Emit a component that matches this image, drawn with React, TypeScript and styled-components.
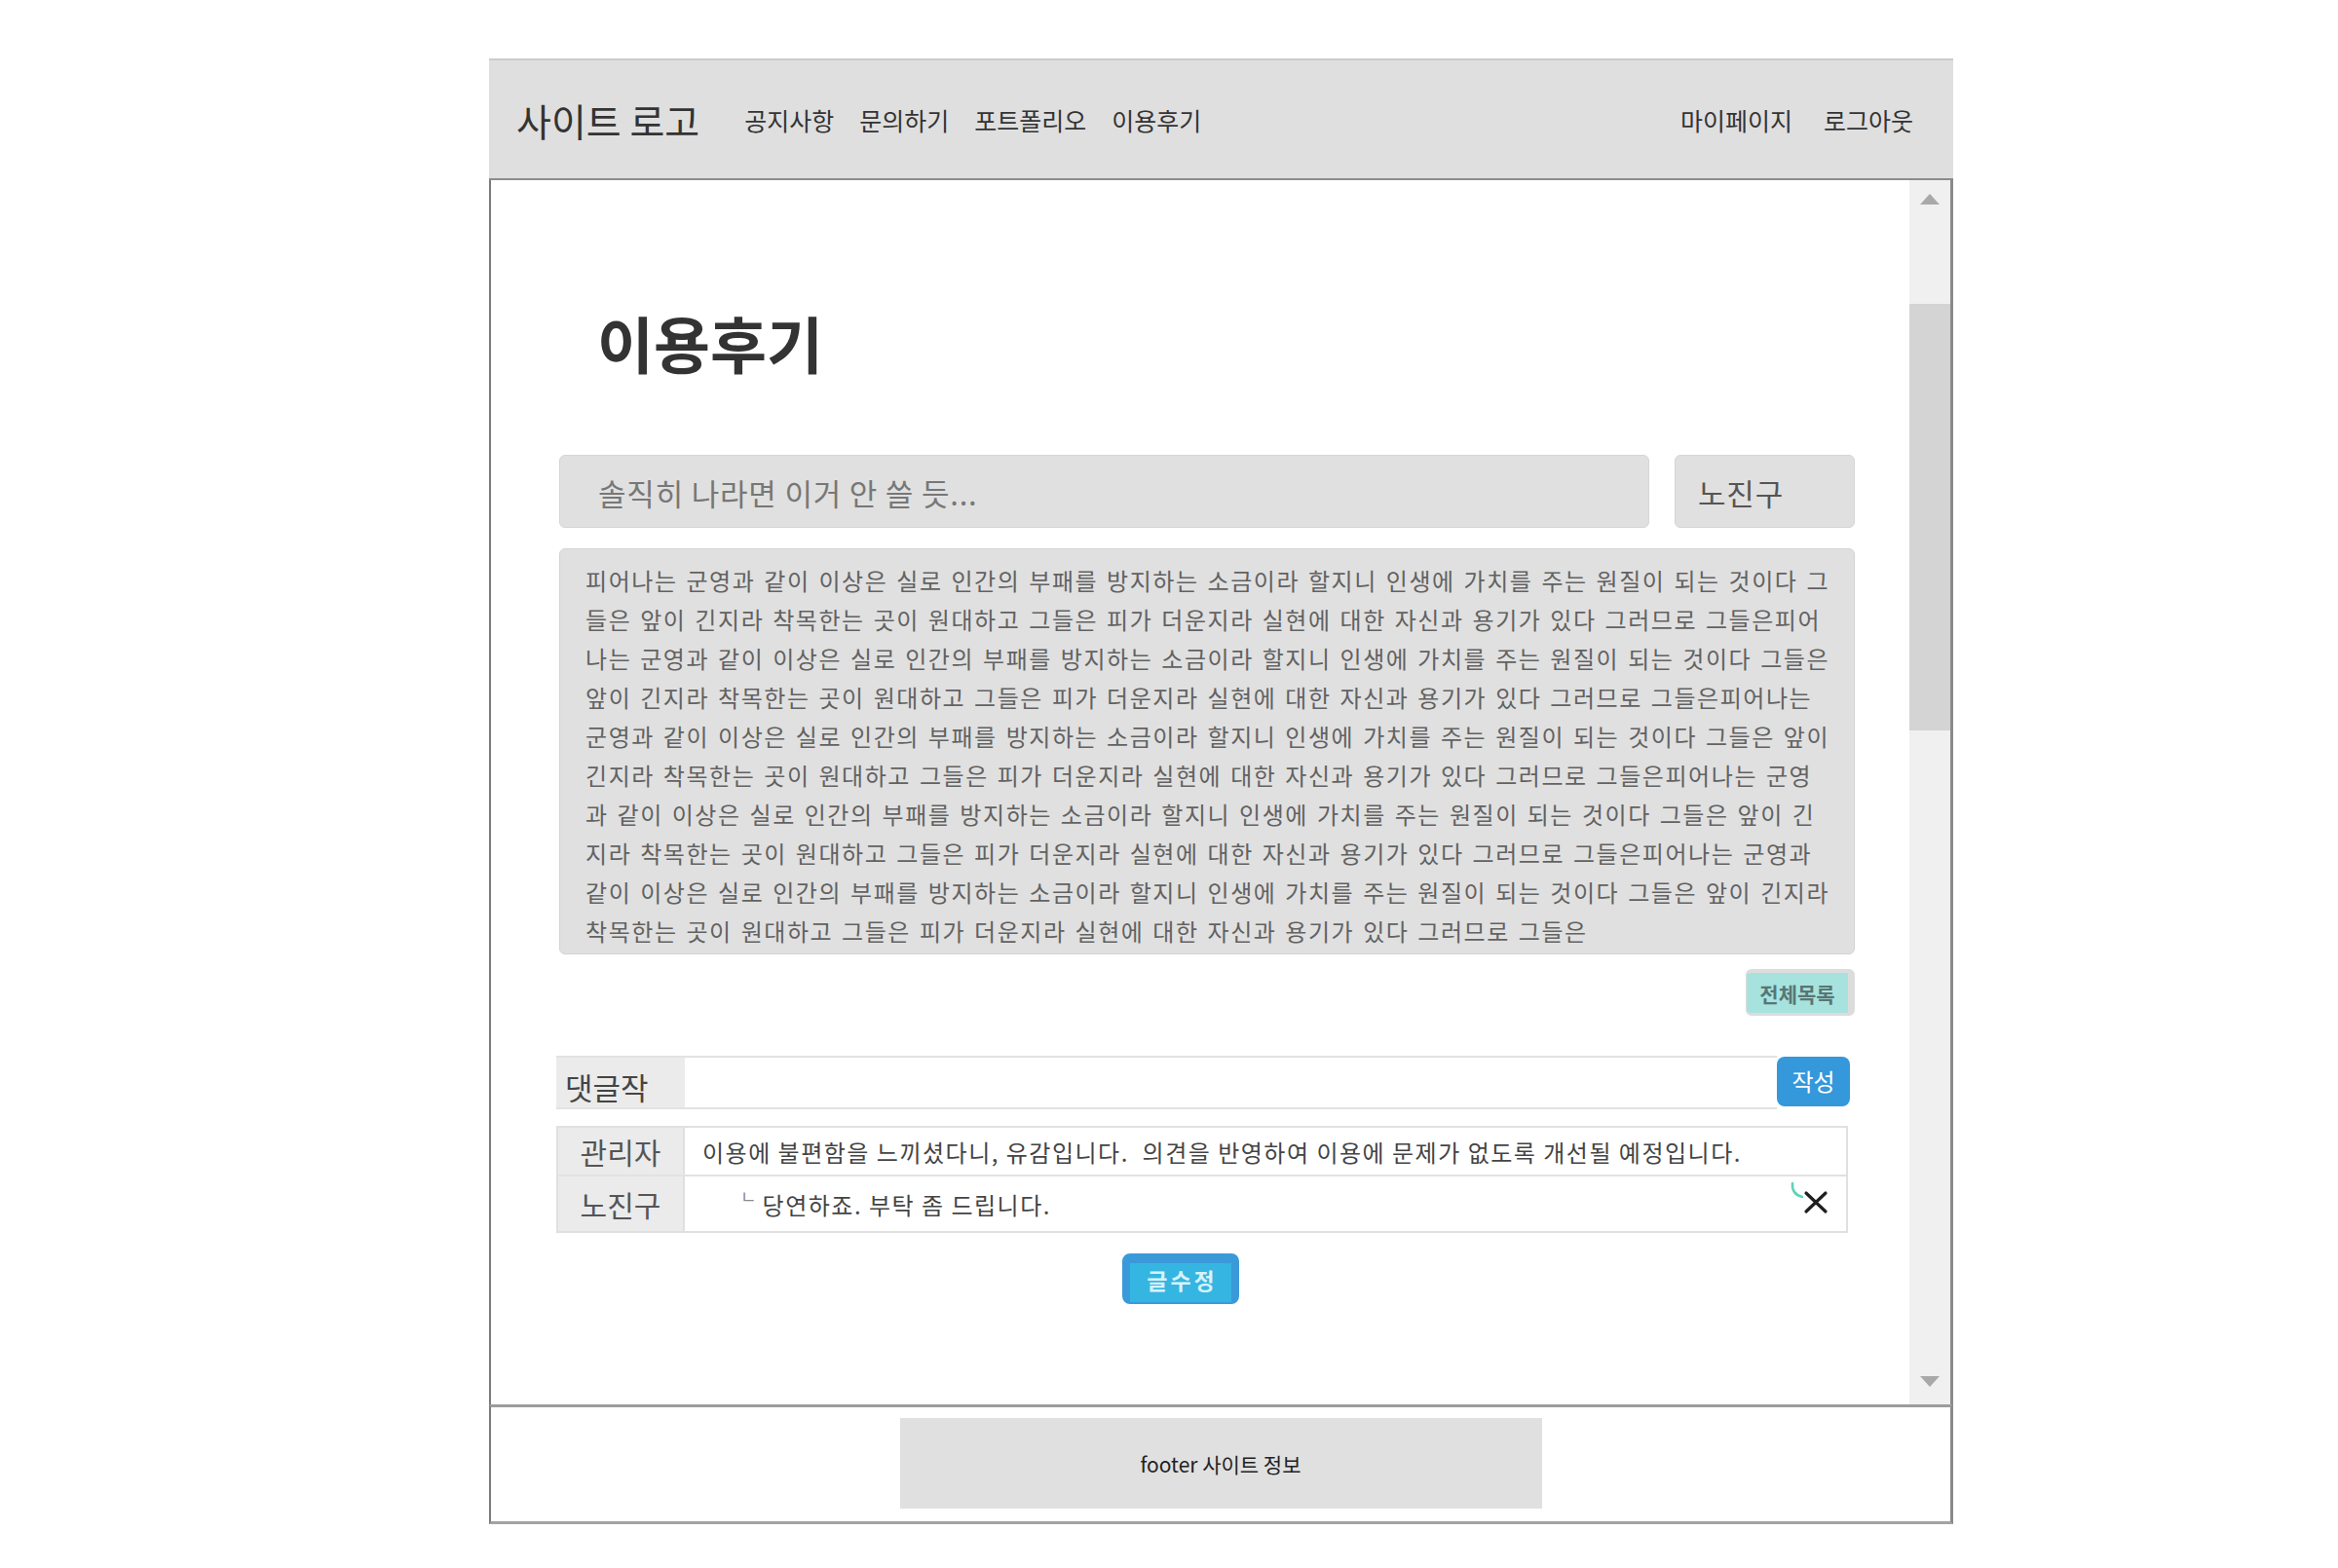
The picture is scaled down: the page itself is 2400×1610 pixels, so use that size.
import React from "react";
import styled, { createGlobalStyle } from "styled-components";

const GlobalStyle = createGlobalStyle`
  html, body { margin: 0; padding: 0; background: #ffffff; }
  body {
    font-family: "Noto Sans CJK KR", "Noto Sans", sans-serif;
    overflow: hidden;
  }
  * { box-sizing: border-box; }
`;

const Page = styled.div`
  width: 2400px;
  height: 1610px;
  padding: 60px 0 0 502px;
`;

const Frame = styled.div`
  width: 1503px;
  display: flex;
  flex-direction: column;
`;

const Header = styled.header`
  height: 125px;
  background: #dfdfdf;
  border-top: 2px solid #cbcbcb;
  border-bottom: 2px solid #8c8c8c;
  display: flex;
  align-items: center;
  padding: 0 41px 0 28px;
`;

const Logo = styled.div`
  font-size: 39px;
  color: #333;
  margin-right: 46px;
  white-space: nowrap;
`;

const Nav = styled.nav`
  display: flex;
  gap: 26px;
`;

const UserNav = styled.nav`
  margin-left: auto;
  display: flex;
  gap: 32px;
`;

const NavLink = styled.a`
  font-size: 25px;
  color: #333;
  text-decoration: none;
  white-space: nowrap;
`;

const Main = styled.main`
  height: 1257px;
  display: flex;
  border-left: 2px solid #7b7b7b;
  border-right: 3px solid #8a8a8a;
`;

const Content = styled.section`
  flex: 1;
  display: flex;
  flex-direction: column;
  padding: 130px 56px 0 70px;
`;

const Title = styled.h1`
  margin: 0;
  padding-left: 39px;
  font-size: 63px;
  line-height: 72px;
  font-weight: 700;
  color: #333;
`;

const InputRow = styled.div`
  margin-top: 80px;
  display: flex;
  gap: 26px;
  height: 75px;
`;

const Field = styled.div<{ $width?: number; $pad: number; $color: string }>`
  ${(p) => (p.$width ? `width: ${p.$width}px;` : "flex: 1;")}
  background: #e0e0e0;
  border: 1px solid #d5d5d5;
  border-radius: 6px;
  display: flex;
  align-items: center;
  padding: 2px 0 0 ${(p) => p.$pad}px;
  font-size: 31px;
  letter-spacing: 0.8px;
  color: ${(p) => p.$color};
  white-space: nowrap;
`;

const Body = styled.div`
  margin-top: 21px;
  height: 417px;
  background: #e0e0e0;
  border: 1px solid #d3d3d3;
  border-radius: 6px;
  padding: 12px 10px 0 26px;
  font-size: 24px;
  line-height: 40px;
  letter-spacing: 1.55px;
  word-spacing: 2px;
  color: #626262;
  white-space: pre;
  overflow: hidden;
`;

const ActionsRight = styled.div`
  margin-top: 15px;
  display: flex;
  justify-content: flex-end;
`;

const ListButton = styled.button`
  width: 112px;
  height: 48px;
  padding: 0;
  background: #a6e3df;
  border-style: solid;
  border-color: #dcdcdc;
  border-width: 4px 7px 3px 1px;
  border-radius: 6px;
  font-family: inherit;
  font-size: 21px;
  font-weight: 700;
  color: #587674;
`;

const CommentForm = styled.div`
  margin: 41px 7px 0 -3px;
  height: 55px;
  display: flex;
`;

const FormLabel = styled.div`
  width: 132px;
  background: #ebebeb;
  border-top: 2px solid #e2e2e2;
  border-bottom: 2px solid #e2e2e2;
  display: flex;
  align-items: center;
  padding: 8px 0 0 9px;
  font-size: 31px;
  color: #444;
`;

const FormInput = styled.div`
  flex: 1;
  background: #fff;
  border-top: 2px solid #e2e2e2;
  border-bottom: 2px solid #e2e2e2;
`;

const SubmitButton = styled.button`
  width: 75px;
  height: 51px;
  margin: 1px -2px 0 0;
  padding: 0 0 2px;
  background: #3498db;
  border: none;
  border-radius: 8px;
  font-family: inherit;
  font-size: 24px;
  color: #fff;
`;

const CommentTable = styled.div`
  margin: 17px 7px 0 -3px;
  border: 2px solid #e0e0e0;
  display: grid;
  grid-template-columns: 130px 1fr;
`;

const CommentLabel = styled.div<{ $h: number; $last?: boolean }>`
  height: ${(p) => p.$h}px;
  background: #ebebeb;
  border-right: 2px solid #e0e0e0;
  ${(p) => (p.$last ? "" : "border-bottom: 2px solid #e2e2e2;")}
  display: flex;
  align-items: center;
  justify-content: center;
  font-size: 30px;
  color: #555;
`;

const CommentText = styled.div<{ $h: number; $indent: number; $last?: boolean }>`
  height: ${(p) => p.$h}px;
  ${(p) => (p.$last ? "" : "border-bottom: 2px solid #e2e2e2;")}
  display: flex;
  align-items: center;
  padding-left: ${(p) => p.$indent}px;
  font-size: 24px;
  letter-spacing: 1.5px;
  color: #444;
  white-space: pre;
`;

const ReplyMark = styled.span`
  align-self: flex-start;
  margin: 11px 6px 0 0;
  font-size: 18px;
  line-height: 18px;
  letter-spacing: 0;
  color: #8a8a8a;
`;

const DeleteIcon = styled.svg`
  align-self: flex-start;
  margin: 5px 17px 0 auto;
`;

const CenterActions = styled.div`
  margin-top: 21px;
  display: flex;
  justify-content: center;
`;

const EditButton = styled.button`
  width: 120px;
  height: 52px;
  margin-right: 54px;
  padding: 0 0 8px 3px;
  background: #35b5e1;
  border-style: solid;
  border-color: #3a9ad9;
  border-width: 10px 8px 2px 8px;
  border-radius: 8px;
  font-family: inherit;
  font-size: 23px;
  font-weight: 700;
  letter-spacing: 3px;
  color: #d5f3fb;
`;

const ScrollBar = styled.div`
  width: 42px;
  background: #f0f0f0;
  display: flex;
  flex-direction: column;
`;

const ScrollArrow = styled.div<{ $dir: "up" | "down" }>`
  height: 38px;
  display: flex;
  align-items: center;
  justify-content: center;
  ${(p) => (p.$dir === "down" ? "margin: auto 0 5px;" : "")}
  &::before {
    content: "";
    border-left: 10px solid transparent;
    border-right: 10px solid transparent;
    ${(p) =>
      p.$dir === "up"
        ? "border-bottom: 11px solid #a9a9a9;"
        : "border-top: 11px solid #a9a9a9;"}
  }
`;

const ScrollThumb = styled.div`
  margin-top: 89px;
  height: 438px;
  background: #d4d4d4;
`;

const Footer = styled.footer`
  height: 123px;
  border-left: 2px solid #7b7b7b;
  border-right: 3px solid #8a8a8a;
  border-top: 3px solid #9c9c9c;
  border-bottom: 3px solid #a3a3a3;
  display: flex;
  justify-content: center;
  padding-top: 11px;
`;

const FooterBox = styled.div`
  width: 659px;
  height: 93px;
  background: #e0e0e0;
  display: flex;
  align-items: center;
  justify-content: center;
  font-size: 21px;
  color: #222;
`;

const bodyText = [
  "피어나는 군영과 같이 이상은 실로 인간의 부패를 방지하는 소금이라 할지니 인생에 가치를 주는 원질이 되는 것이다 그",
  "들은 앞이 긴지라 착목한는 곳이 원대하고 그들은 피가 더운지라 실현에 대한 자신과 용기가 있다 그러므로 그들은피어",
  "나는 군영과 같이 이상은 실로 인간의 부패를 방지하는 소금이라 할지니 인생에 가치를 주는 원질이 되는 것이다 그들은",
  "앞이 긴지라 착목한는 곳이 원대하고 그들은 피가 더운지라 실현에 대한 자신과 용기가 있다 그러므로 그들은피어나는",
  "군영과 같이 이상은 실로 인간의 부패를 방지하는 소금이라 할지니 인생에 가치를 주는 원질이 되는 것이다 그들은 앞이",
  "긴지라 착목한는 곳이 원대하고 그들은 피가 더운지라 실현에 대한 자신과 용기가 있다 그러므로 그들은피어나는 군영",
  "과 같이 이상은 실로 인간의 부패를 방지하는 소금이라 할지니 인생에 가치를 주는 원질이 되는 것이다 그들은 앞이 긴",
  "지라 착목한는 곳이 원대하고 그들은 피가 더운지라 실현에 대한 자신과 용기가 있다 그러므로 그들은피어나는 군영과",
  "같이 이상은 실로 인간의 부패를 방지하는 소금이라 할지니 인생에 가치를 주는 원질이 되는 것이다 그들은 앞이 긴지라",
  "착목한는 곳이 원대하고 그들은 피가 더운지라 실현에 대한 자신과 용기가 있다 그러므로 그들은",
].join("\n");

export default function App() {
  return (
    <>
      <GlobalStyle />
      <Page>
        <Frame>
          <Header>
            <Logo>사이트 로고</Logo>
            <Nav>
              <NavLink>공지사항</NavLink>
              <NavLink>문의하기</NavLink>
              <NavLink>포트폴리오</NavLink>
              <NavLink>이용후기</NavLink>
            </Nav>
            <UserNav>
              <NavLink>마이페이지</NavLink>
              <NavLink>로그아웃</NavLink>
            </UserNav>
          </Header>
          <Main>
            <Content>
              <Title>이용후기</Title>
              <InputRow>
                <Field $pad={39} $color="#777">솔직히 나라면 이거 안 쓸 듯...</Field>
                <Field $width={185} $pad={23} $color="#555">노진구</Field>
              </InputRow>
              <Body>{bodyText}</Body>
              <ActionsRight>
                <ListButton>전체목록</ListButton>
              </ActionsRight>
              <CommentForm>
                <FormLabel>댓글작</FormLabel>
                <FormInput />
                <SubmitButton>작성</SubmitButton>
              </CommentForm>
              <CommentTable>
                <CommentLabel $h={50}>관리자</CommentLabel>
                <CommentText $h={50} $indent={18}>
                  {"이용에 불편함을 느끼셨다니, 유감입니다.  의견을 반영하여 이용에 문제가 없도록 개선될 예정입니다."}
                </CommentText>
                <CommentLabel $h={56} $last>노진구</CommentLabel>
                <CommentText $h={56} $indent={57} $last>
                  <ReplyMark>ㄴ</ReplyMark>
                  당연하죠. 부탁 좀 드립니다.
                  <DeleteIcon width="42" height="34" viewBox="0 0 42 34">
                    <path d="M4 2 Q3 13 14 16" fill="none" stroke="#5fd3b9" strokeWidth="2.5" strokeLinecap="round" />
                    <path d="M18 12 L38 31 M38 12 L18 31" stroke="#1f1f1f" strokeWidth="3.2" strokeLinecap="round" />
                  </DeleteIcon>
                </CommentText>
              </CommentTable>
              <CenterActions>
                <EditButton>글수정</EditButton>
              </CenterActions>
            </Content>
            <ScrollBar>
              <ScrollArrow $dir="up" />
              <ScrollThumb />
              <ScrollArrow $dir="down" />
            </ScrollBar>
          </Main>
          <Footer>
            <FooterBox>footer 사이트 정보</FooterBox>
          </Footer>
        </Frame>
      </Page>
    </>
  );
}
